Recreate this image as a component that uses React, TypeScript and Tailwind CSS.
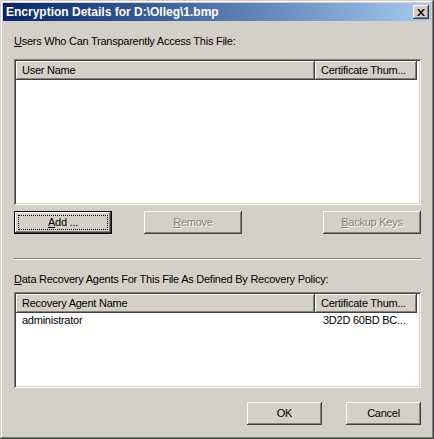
import React from 'react';

const font = { fontFamily: '"Liberation Sans", Arial, sans-serif' };

const raised =
  'bg-[#d4d0c8] shadow-[inset_-1px_-1px_#404040,inset_1px_1px_#fff,inset_-2px_-2px_#808080,inset_2px_2px_#d4d0c8]';
const sunken =
  'shadow-[inset_1px_1px_#808080,inset_-1px_-1px_#fff,inset_2px_2px_#404040,inset_-2px_-2px_#d4d0c8]';

const U = ({ children }: { children: React.ReactNode }) => <span className="underline underline-offset-[1px]">{children}</span>;

const Button = ({
  label,
  width,
  disabled,
  isDefault,
}: {
  label: React.ReactNode;
  width: string;
  disabled?: boolean;
  isDefault?: boolean;
}) => (
  <div
    className={`${width} h-[23px] relative flex items-center justify-center text-[11px] ${
      isDefault ? 'border border-black' : ''
    } ${raised} ${disabled ? 'text-[#808080] [text-shadow:1px_1px_#fff]' : 'text-black'}`}
  >
    {isDefault && <div className="absolute inset-[3px] border border-dotted border-black" />}
    <span>{label}</span>
  </div>
);

const Header = ({ cols }: { cols: { label: string; w: string }[] }) => (
  <div className="flex h-[19px] bg-white">
    {cols.map((c) => (
      <div key={c.label} className={`${c.w} ${raised} flex items-center pl-[6px] text-[11px] text-black`}>
        {c.label}
      </div>
    ))}
  </div>
);

export default function App() {
  return (
    <div
      className="w-[434px] h-[439px] bg-[#d4d0c8] p-[3px] flex flex-col tracking-[-0.25px] shadow-[inset_-1px_-1px_#404040,inset_1px_1px_#d4d0c8,inset_-2px_-2px_#808080,inset_2px_2px_#fff]"
      style={font}
    >
      {/* title bar */}
      <div className="h-[18px] flex items-center justify-between bg-gradient-to-r from-[#0a246a] to-[#a6caf0] pl-[3px] pr-[2px]">
        <span className="text-white font-bold text-[12px] tracking-normal">Encryption Details for D:\Olleg\1.bmp</span>
        <div className={`w-[16px] h-[14px] ${raised} flex items-center justify-center`}>
          <svg width="8" height="7" viewBox="0 0 8 7">
            <path d="M0 0h2l2 2.5L6 0h2L5 3.5 8 7H6L4 4.5 2 7H0l3-3.5z" fill="#000" />
          </svg>
        </div>
      </div>

      <div className="flex-1 flex flex-col pl-[11px] pr-[10px] pt-[14px] text-[11px] text-black">
        <div className="h-[13px] leading-[13px]">
          <U>U</U>sers Who Can Transparently Access This File:
        </div>
        <div className={`mt-[11px] h-[146px] bg-white p-[2px] ${sunken}`}>
          <Header
            cols={[
              { label: 'User Name', w: 'w-[299px]' },
              { label: 'Certificate Thum...', w: 'w-[102px]' },
            ]}
          />
        </div>

        <div className="mt-[6px] flex justify-between">
          <div className="flex gap-[32px]">
            <Button label={<><U>A</U>dd ...</>} width="w-[98px]" isDefault />
            <Button label={<><U>R</U>emove</>} width="w-[98px]" disabled />
          </div>
          <Button label={<><U>B</U>ackup Keys</>} width="w-[98px]" disabled />
        </div>

        <div className="mt-[24px] h-[2px] border-t border-[#808080] border-b border-b-white" />

        <div className="mt-[13px] h-[13px] leading-[13px]">
          <U>D</U>ata Recovery Agents For This File As Defined By Recovery Policy:
        </div>
        <div className={`mt-[6px] h-[96px] bg-white p-[2px] ${sunken}`}>
          <Header
            cols={[
              { label: 'Recovery Agent Name', w: 'w-[299px]' },
              { label: 'Certificate Thum...', w: 'w-[102px]' },
            ]}
          />
          <div className="flex h-[14px] items-center">
            <div className="w-[299px] pl-[6px]">administrator</div>
            <div className="pl-[8px]">3D2D 60BD BC...</div>
          </div>
        </div>

        <div className="mt-[14px] flex justify-end gap-[24px]">
          <Button label="OK" width="w-[75px]" />
          <Button label="Cancel" width="w-[75px]" />
        </div>
      </div>
    </div>
  );
}
